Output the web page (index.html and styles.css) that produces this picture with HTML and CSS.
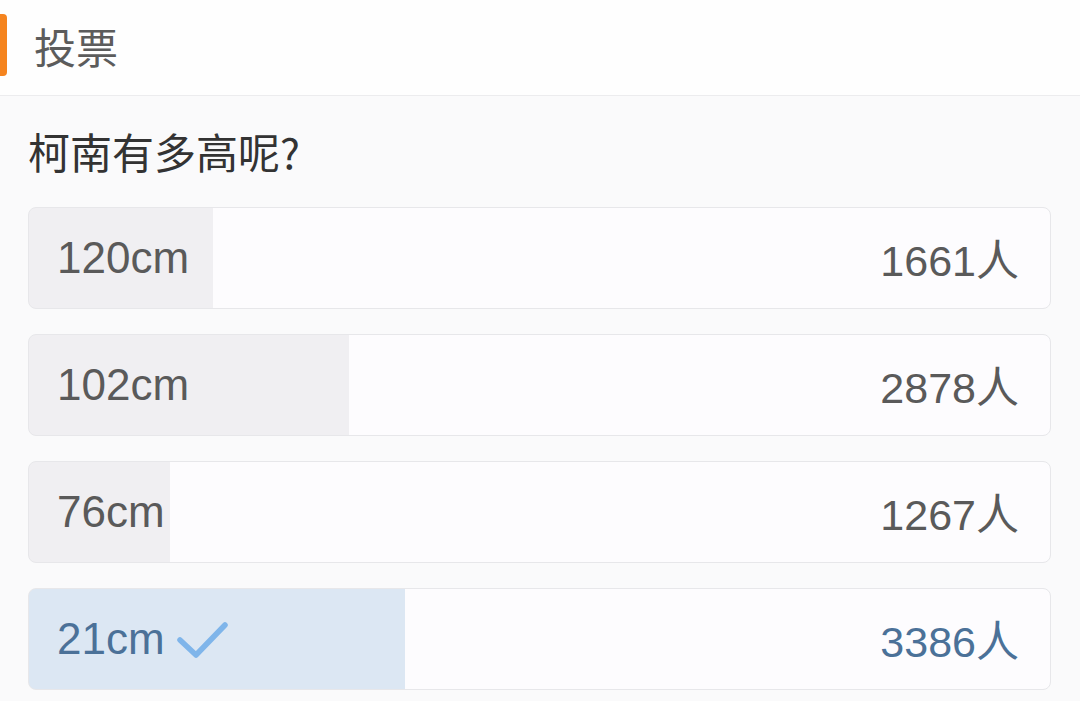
FILE: index.html
```html
<!DOCTYPE html>
<html lang="zh-CN">
<head>
<meta charset="utf-8">
<title>投票</title>
<link rel="stylesheet" href="styles.css">
</head>
<body>
  <header class="header">
    <span class="accent"></span>
    <h1 class="title">投票</h1>
  </header>
  <main class="poll">
    <h2 class="question">柯南有多高呢?</h2>
    <ul class="options">
      <li class="option" style="--p: 18.07%"><span class="label">120cm</span><span class="count">1661人</span></li>
      <li class="option" style="--p: 31.31%"><span class="label">102cm</span><span class="count">2878人</span></li>
      <li class="option" style="--p: 13.78%"><span class="label">76cm</span><span class="count">1267人</span></li>
      <li class="option chosen" style="--p: 36.84%"><span class="label">21cm<svg class="check" width="54" height="40" viewBox="0 0 54 40"><path d="M4 20 L20 35 L49 5" fill="none" stroke="#7fb5ea" stroke-width="5.5" stroke-linecap="round" stroke-linejoin="round"/></svg></span><span class="count">3386人</span></li>
    </ul>
  </main>
</body>
</html>
```

FILE: styles.css
```css
html, body {
  margin: 0;
  padding: 0;
}
body {
  width: 1080px;
  height: 701px;
  overflow: hidden;
  background: #fafafb;
  font-family: "Liberation Sans", "Noto Sans CJK SC", sans-serif;
}
.header {
  height: 95px;
  background: #fefefe;
  border-bottom: 1px solid #ececee;
  display: flex;
  align-items: center;
}
.accent {
  width: 7px;
  height: 62px;
  margin-top: -6px;
  background: #f5841f;
  border-radius: 0 4px 4px 0;
}
.title {
  margin: -4px 0 0 27px;
  font-family: "Noto Sans CJK SC", sans-serif;
  font-weight: 400;
  font-size: 42px;
  line-height: 1;
  color: #5c5c5c;
}
.poll {
  padding: 26px 28px 0 28px;
}
.question {
  margin: 0;
  height: 58px;
  line-height: 58px;
  font-family: "Noto Sans CJK SC", sans-serif;
  font-weight: 400;
  font-size: 42px;
  color: #333333;
}
.options {
  list-style: none;
  margin: 27px 0 0 0;
  padding: 0;
  display: flex;
  flex-direction: column;
  gap: 25px;
  width: 1023px;
}
.option {
  box-sizing: border-box;
  height: 102px;
  border: 1px solid #e7e7ea;
  border-radius: 8px;
  background: linear-gradient(to right, #f0eff2 var(--p), #fdfcfe var(--p));
  display: flex;
  align-items: center;
  justify-content: space-between;
  padding: 0 31px 0 28px;
  font-size: 44px;
  color: #5a5a5a;
  overflow: hidden;
}
.option.chosen {
  background: linear-gradient(to right, #dce7f3 var(--p), #fdfcfe var(--p));
  color: #4b7198;
}
.label {
  display: flex;
  align-items: center;
}
.count {
  font-size: 43px;
  margin-top: -3px;
}
.check {
  margin-left: 11px;
  margin-top: 2px;
}
```
